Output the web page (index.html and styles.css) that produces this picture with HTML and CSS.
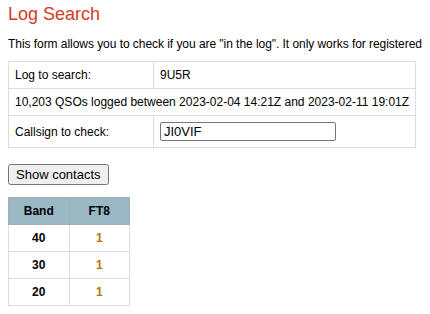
FILE: index.html
```html
<!DOCTYPE html>
<html lang="en">
<head>
  <meta charset="UTF-8">
  <title>Log Search</title>
  <link rel="stylesheet" href="styles.css">
</head>
<body>
  <h1>Log Search</h1>
  <p class="intro">This form allows you to check if you are "in the log". It only works for registered</p>

  <form>
    <table class="search">
      <tr>
        <td class="label">Log to search:</td>
        <td>9U5R</td>
      </tr>
      <tr>
        <td colspan="2">10,203 QSOs logged between 2023-02-04 14:21Z and 2023-02-11 19:01Z</td>
      </tr>
      <tr>
        <td class="label">Callsign to check:</td>
        <td><input type="text" class="call" value="JI0VIF"></td>
      </tr>
    </table>
    <button type="button" class="show">Show contacts</button>
  </form>

  <table class="results">
    <tr><th>Band</th><th>FT8</th></tr>
    <tr><td class="band">40</td><td class="count">1</td></tr>
    <tr><td class="band">30</td><td class="count">1</td></tr>
    <tr><td class="band">20</td><td class="count">1</td></tr>
  </table>
</body>
</html>
```

FILE: styles.css
```css
/* General */
body {
  font-family: "Liberation Sans", Arial, sans-serif;
  font-size: 12px;
  color: #000;
  background: #fff;
  margin: 0 8px;
  white-space: nowrap;
}

h1 {
  font-size: 18px;
  font-weight: normal;
  color: #d03c28;
  margin: 4px 0 0;
}

.intro {
  margin: 12px 0 10px;
  letter-spacing: -0.05px;
}

/* Search form */
.search {
  border-collapse: collapse;
  width: 405px;
}

.search td {
  border: 1px solid #ddd;
  padding: 6px;
}

.search .label {
  width: 132px;
}

.call {
  font-family: "Liberation Sans", Arial, sans-serif;
  font-size: 13px;
  width: 168px;
  padding: 1px 3px;
  border: 1px solid #767676;
  border-radius: 2px;
  margin: 0;
}

.show {
  font-family: "Liberation Sans", Arial, sans-serif;
  font-size: 13px;
  margin: 16px 0 12px;
  padding: 1px 6px;
}

/* Results */
.results {
  border-collapse: collapse;
  width: 122px;
}

.results th,
.results td {
  border: 1px solid #ddd;
  padding: 6px;
  text-align: center;
  font-weight: bold;
  width: 50%;
}

.results th {
  background: #9ab8c4;
  border-color: #aab;
}

.count {
  color: #b07800;
}
```
